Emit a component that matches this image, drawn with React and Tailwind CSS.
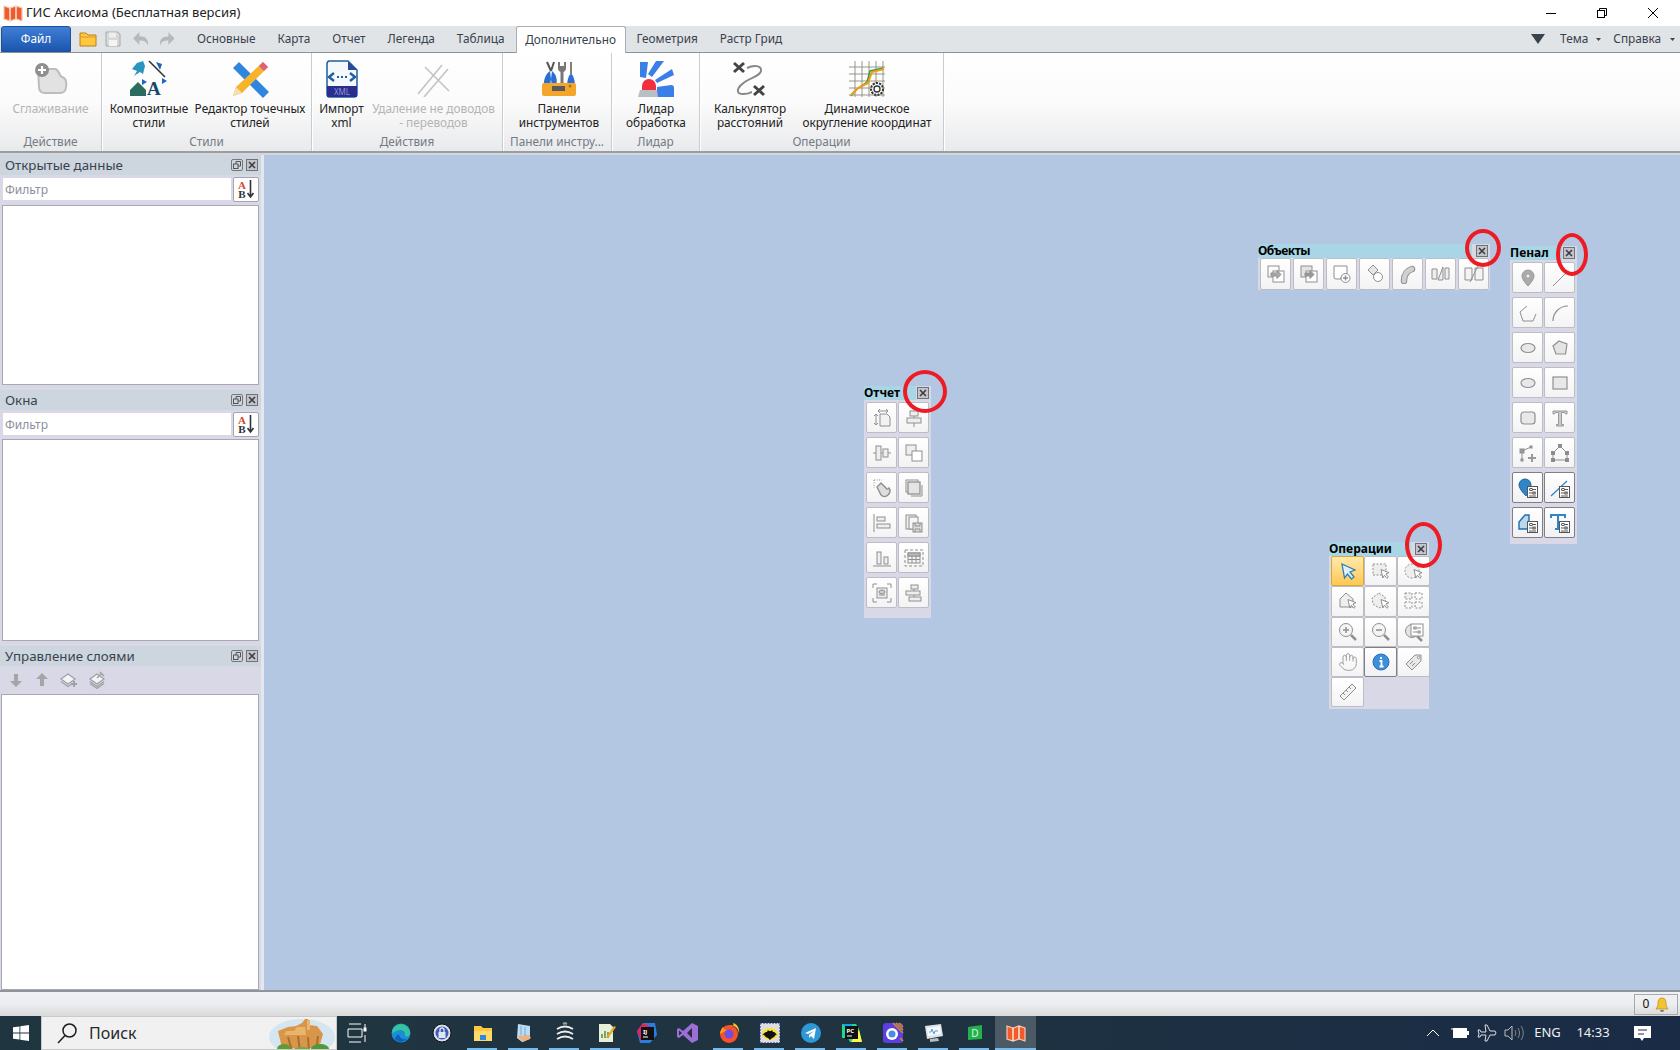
import { Hand } from "lucide-react"

const S = "#8f8f8f"

// small cursor used by the selection tools
const Cursor = () => <path d="M10 8.5l8 3.2-3.2 1.3 2.6 3-1.4 1.3-2.6-3-1.6 2.7z" fill="#fff" stroke={S} strokeWidth="1" />

// small style sheet badge
const Sheet = () => (
  <g stroke="#555" strokeWidth="1">
    <rect x="9.5" y="8.5" width="10" height="11" fill="#fff" />
    <path d="M11 11.5h7M11 15h7M11 18h7" />
    <rect x="12" y="10.5" width="2" height="2" fill="#fff" />
    <rect x="15" y="14" width="2" height="2" fill="#fff" />
  </g>
)

const Doc = ({ x = 0, y = 0 }) => <path transform={`translate(${x} ${y})`} d="M2 2h7l3 3v9H2z" fill="#f2f2f2" />

const toolIcons = {
  resize: <><path d="M6 3h10M6 3l2-2M6 3l2 2M16 3l-2-2M16 3l-2 2M4 6v11M4 6L2 8M4 6l2 2M4 17l-2-2M4 17l2-2" /><Doc x={6} y={4} /></>,
  alignV: <><path d="M10 1v18" /><rect x="6" y="3" width="8" height="5" fill="#eee" /><rect x="3" y="10" width="14" height="5" fill="#eee" /></>,
  alignH: <><path d="M1 10h18" /><rect x="4" y="3" width="5" height="14" fill="#eee" /><rect x="11" y="6" width="5" height="8" fill="#eee" /></>,
  overlap: <><rect x="2" y="2" width="10" height="10" fill="#eee" /><rect x="8" y="8" width="10" height="10" fill="#fff" /></>,
  magnet: <><path d="M2 2h8M2 2v8" strokeDasharray="1 1.5" /><path d="M5 9l4-4 6 6a2 2 0 0 0 2-1 5 5 0 0 1-1 7 5 5 0 0 1-7 0z" fill="#ddd" strokeWidth="1.4" /></>,
  stack: <><rect x="2" y="2" width="12" height="12" /><rect x="4" y="4" width="12" height="12" fill="#e4e4e4" strokeWidth="1.3" /><path d="M18 7v11H7" /></>,
  left: <><path d="M2 1v18" /><rect x="5" y="4" width="8" height="4" fill="#eee" /><rect x="5" y="11" width="13" height="4" fill="#eee" /></>,
  copySave: <><rect x="2" y="2" width="10" height="14" fill="#eee" /><rect x="5" y="4" width="9" height="12" fill="#f6f6f6" /><rect x="9" y="10" width="9" height="9" fill="#ddd" /><path d="M11 10v3h5v-3M11 19v-3h5v3" /></>,
  bottom: <><path d="M1 18h18" /><rect x="5" y="4" width="4" height="12" fill="#eee" /><rect x="12" y="9" width="4" height="7" fill="#eee" /></>,
  tableFrame: <><rect x="1" y="2" width="18" height="16" strokeDasharray="3 2" /><rect x="4" y="5" width="12" height="10" fill="#f4f4f4" /><path d="M4 8h12M4 11.5h12M8 5v10M12 5v10" /><rect x="4" y="5" width="12" height="3" fill="#bbb" /></>,
  fit: <><path d="M1 5V1h4M15 1h4v4M1 15v4h4M19 15v4h-4" /><rect x="5" y="5" width="10" height="10" fill="#eee" /><ellipse cx="10" cy="9" rx="3" ry="2" fill="#ccc" /><path d="M7 12h6" /></>,
  org: <><rect x="7" y="2" width="7" height="4" fill="#eee" /><rect x="2" y="8" width="14" height="4" fill="#eee" /><rect x="5" y="14" width="12" height="4" fill="#eee" /><path d="M10 6v2M10 12v2" /></>,
  copyIn: <><rect x="2" y="2" width="11" height="11" /><rect x="7" y="7" width="11" height="11" fill="#fff" /><path d="M5 9h6V6.5l4 4-4 4V12H5z" fill="#aaa" /></>,
  copyOut: <><rect x="2" y="2" width="11" height="11" fill="#e4e4e4" /><rect x="7" y="7" width="11" height="11" fill="#fff" /><path d="M6 9h5V6.5l4 4-4 4V12H6z" fill="#999" /></>,
  addShape: <><path d="M2 2h13v8h-2a5 5 0 0 0-4 5H4a2 2 0 0 1-2-2z" fill="#fff" /><circle cx="13.5" cy="14" r="4.5" fill="#fff" /><path d="M11 14h5M13.5 11.5v5" strokeWidth="1.4" /></>,
  diamond: <><path d="M8 1l5 5-5 5-5-5z" fill="#e6e6e6" /><circle cx="13" cy="13" r="4.5" fill="#fff" /></>,
  bend: <><path d="M6 17c0-6 2-10 8-12" strokeWidth="6.5" strokeLinecap="round" /><path d="M6 17c0-6 2-10 8-12" stroke="#d0d0d0" strokeWidth="4.5" strokeLinecap="round" /></>,
  mirror: <><path d="M1 5h5v10H1zM7 16L12 3v13zM14 4h4v11h-4z" fill="#eee" /></>,
  slash: <><path d="M1 4h7v12H1zM11 4h8v12h-8z" fill="#f4f4f4" /><path d="M6 18L14 2" /></>,
  pin: <><path d="M10 2a6 6 0 0 1 6 6c0 4-6 10-6 10S4 12 4 8a6 6 0 0 1 6-6z" fill="#aaa" stroke="#999" /><circle cx="10" cy="8" r="1.5" fill="#eee" stroke="none" /></>,
  line: <path d="M3 18L17 4" />,
  polyOpen: <path d="M9 3L2 9l3 9h10l3-7" />,
  arc: <path d="M3 18C3 10 9 3 18 3" strokeWidth="1.2" />,
  ellipse: <ellipse cx="10" cy="10" rx="7" ry="4.5" fill="#e8e8e8" strokeWidth="1.2" />,
  pentagon: <path d="M9 3l8 3-1.5 10H6L3 8z" fill="#e4e4e4" strokeWidth="1.2" />,
  rect: <rect x="3" y="4" width="14" height="12" fill="#e8e8e8" strokeWidth="1.2" />,
  round: <rect x="3" y="4" width="14" height="12" rx="3" fill="#e8e8e8" strokeWidth="1.2" />,
  serifT: <path d="M3 6V3h14v3h-1.5l-1-1.5h-3v12h2V18H6.5v-1.500h2v-12h-3l-1 1.500z" fill="#ccc" stroke="#999" />,
  nodeAdd: <><path d="M4 8l9-4M4 8v9" /><rect x="2" y="6" width="4" height="4" fill="#999" /><rect x="12" y="3" width="2" height="2" fill="#999" /><rect x="3" y="16" width="2" height="2" fill="#999" /><path d="M10 15h8M14 11v8" stroke="#999" strokeWidth="2" /></>,
  nodePoly: <><path d="M10 3L3 10v7h14v-7z" /><g fill="#888"><rect x="8.5" y="1.5" width="3" height="3" /><rect x="1.5" y="8.5" width="3" height="3" /><rect x="15.5" y="8.5" width="3" height="3" /><rect x="1.5" y="15.5" width="3" height="3" /><rect x="15.5" y="15.5" width="3" height="3" /></g></>,
  pinStyle: <><path d="M7 1a6 6 0 0 1 6 6c0 4-5 11-5 11S1 11 1 7a6 6 0 0 1 6-6z" fill="#2e86c9" stroke="#1f5f96" /><Sheet /></>,
  lineStyle: <><path d="M1 18L17 3" stroke="#2e86c9" strokeWidth="1.3" /><Sheet /></>,
  polyStyle: <><path d="M7 2L1 9v7h10V2z" fill="#bcd8ee" stroke="#1f6fb0" strokeWidth="1.4" /><Sheet /></>,
  tStyle: <><path d="M1 5V2h14v3M8 2v14M5 16h6" stroke="#2e86c9" strokeWidth="2" /><Sheet /></>,
  arrow: <path d="M4 3l13 6-5 2 4 5-2.5 2-4-5-3 4z" fill="#dff0fb" stroke="#2f7fb8" strokeWidth="1.3" />,
  dashRect: <><rect x="2" y="3" width="13" height="11" fill="#eee" strokeDasharray="2 1.5" /><Cursor /></>,
  dashCircle: <><circle cx="8" cy="10" r="7" fill="#eee" strokeDasharray="2 1.5" /><Cursor /></>,
  house: <><path d="M8 2l7 6v8H2V8z" fill="#eee" /><Cursor /></>,
  dashPoly: <><path d="M8 2l6 4 1 8-7 3-6-4-1-6z" fill="#eee" strokeDasharray="2 1.5" /><Cursor /></>,
  grid: <g strokeDasharray="2 1.5"><rect x="1" y="2" width="7" height="6" fill="#eee" /><rect x="11" y="2" width="7" height="6" /><rect x="1" y="11" width="7" height="6" /><rect x="11" y="11" width="7" height="6" /></g>,
  zoomIn: <><circle cx="8" cy="8" r="6.5" fill="#f4f4f4" /><path d="M5 8h6M8 5v6" strokeWidth="1.5" /><path d="M13 13l5 5" strokeWidth="2.5" /></>,
  zoomOut: <><circle cx="8" cy="8" r="6.5" fill="#f4f4f4" /><path d="M5 8h6" strokeWidth="1.5" /><path d="M13 13l5 5" strokeWidth="2.5" /></>,
  zoomStyle: <><circle cx="8" cy="9" r="6.5" fill="#e4e4e4" /><path d="M13 14l5 5" strokeWidth="2.5" /><rect x="7" y="2" width="12" height="12" fill="#fff" /><path d="M9 6h8M9 10h8" /><rect x="10" y="5" width="2" height="2" fill="#fff" /><rect x="14" y="9" width="2" height="2" fill="#fff" /></>,
  info: <><circle cx="10" cy="10" r="8" fill="#3d8fd9" stroke="#2a6fb0" /><path d="M10 5v2M8.5 9H10.5V14M8.5 14.5h4" stroke="#fff" strokeWidth="1.8" /></>,
  tag: <><path d="M2 12L11 3h6v6l-9 9z" fill="#e8e8e8" /><circle cx="14.5" cy="5.5" r="1.2" fill="#fff" /><path d="M6 12l3-3M8 14l3-3" /></>,
  ruler: <path d="M2 14L14 2l4 4L6 18zM5 11l2 2M8 8l2 2M11 5l2 2" fill="#f2f2f2" />,
}

function ToolIcon({ name }) {
  if (name === "hand") return <Hand size={20} strokeWidth={1.1} color="#999" />
  return (
    <svg width="20" height="20" viewBox="0 0 20 20" fill="none" stroke={S} strokeWidth="1">
      {toolIcons[name]}
    </svg>
  )
}

function CloseBox({ className }) {
  return (
    <div className={`w-[12px] h-[12px] bg-[#c4c4ca] border border-[#6f7276] flex items-center justify-center ${className || ""}`}>
      <svg width="8" height="8" viewBox="0 0 8 8" stroke="#3a3d40" strokeWidth="1.6">
        <path d="M1 1l6 6M7 1l-6 6" />
      </svg>
    </div>
  )
}

function ToolButton({ name, dark, active }) {
  return (
    <button
      className={`flex items-center justify-center border rounded-[2px] ${
        active
          ? "border-[#d8a93f] bg-gradient-to-b from-[#ffe9a8] to-[#ffc850]"
          : dark
            ? "border-[#7f7f85] bg-gradient-to-b from-white to-[#f1f1f4]"
            : "border-[#bdbdc4] bg-gradient-to-b from-white to-[#f3f3f5]"
      }`}
    >
      <ToolIcon name={name} />
    </button>
  )
}

function ToolHeader({ title, headerClass }) {
  return (
    <div className="flex items-center h-[14px] justify-between">
      <div className={`h-full flex items-center text-[12px] font-bold text-black leading-none bg-[#a8d6e6] ${headerClass}`}>{title}</div>
      <CloseBox className="mr-[2px]" />
    </div>
  )
}

function RedRing({ className }) {
  return <div className={`absolute rounded-[50%] border-4 border-[#ed1c24] pointer-events-none ${className}`} />
}

function MapWindows() {
  const report = ["resize", "alignV", "alignH", "overlap", "magnet", "stack", "left", "copySave", "bottom", "tableFrame", "fit", "org"]
  const objects = ["copyIn", "copyOut", "addShape", "diamond", "bend", "mirror", "slash"]
  const pen = ["pin", "line", "polyOpen", "arc", "ellipse", "pentagon", "ellipse", "rect", "round", "serifT", "nodeAdd", "nodePoly"]
  const penDark = ["pinStyle", "lineStyle", "polyStyle", "tStyle"]
  const ops = ["arrow", "dashRect", "dashCircle", "house", "dashPoly", "grid", "zoomIn", "zoomOut", "zoomStyle", "hand", "info", "tag", "ruler"]

  return (
    <>
      <div className="absolute left-[600px] top-[231px] w-[67px] h-[232px] bg-[#d8d8e6]">
        <ToolHeader title="Отчет" headerClass="w-[52px]" />
        <div className="grid grid-cols-[31px_31px] auto-rows-[31px] gap-x-px gap-y-1 pl-[2px] pt-[2px]">
          {report.map((n) => <ToolButton key={n} name={n} />)}
        </div>
        <RedRing className="left-[39px] top-[-16px] w-[44px] h-[43px]" />
      </div>

      <div className="absolute left-[994px] top-[89px] w-[232px] h-[46px] bg-[#d8d8e6]">
        <ToolHeader title="Объекты" headerClass="w-[214px] tracking-[-0.5px]" />
        <div className="grid grid-cols-[repeat(7,31px)] auto-rows-[32px] gap-x-[2px] pl-[2px]">
          {objects.map((n) => <ToolButton key={n} name={n} />)}
        </div>
        <RedRing className="left-[207px] top-[-15px] w-[36px] h-[38px]" />
      </div>

      <div className="absolute left-[1246px] top-[91px] w-[67px] h-[298px] bg-[#d8d8e6]">
        <ToolHeader title="Пенал" headerClass="w-[52px]" />
        <div className="grid grid-cols-[31px_31px] auto-rows-[31px] gap-x-px gap-y-1 pl-[2px] pt-[2px]">
          {pen.map((n, i) => <ToolButton key={i} name={n} />)}
          {penDark.map((n) => <ToolButton key={n} name={n} dark />)}
        </div>
        <RedRing className="left-[46px] top-[-13px] w-[32px] h-[43px]" />
      </div>

      <div className="absolute left-[1065px] top-[387px] w-[100px] h-[167px] bg-[#d8d8e6]">
        <ToolHeader title="Операции" headerClass="w-[82px]" />
        <div className="grid grid-cols-[33px_33px_33px] auto-rows-[30.3px] pl-[2px]">
          {ops.map((n, i) => <ToolButton key={n} name={n} active={i === 0} dark={n === "info"} />)}
        </div>
        <RedRing className="left-[76px] top-[-20px] w-[37px] h-[46px]" />
      </div>
    </>
  )
}

function DockHeader({ title }) {
  return (
    <div className="h-[20px] bg-[#cdd5de] flex items-center pl-[5px] pr-[3px] text-[13.3px] text-[#39434e]">
      <span className="flex-1 pt-[2px]">{title}</span>
      <div className="w-[12px] h-[12px] border border-[#777] rounded-[2px] flex items-center justify-center mr-[3px]">
        <svg width="8" height="8" viewBox="0 0 8 8" fill="none" stroke="#555"><rect x="0.5" y="3" width="4.5" height="4.5" /><path d="M3 3V0.5h4.5V5H5" /></svg>
      </div>
      <CloseBox />
    </div>
  )
}

function FilterRow({ className }) {
  return (
    <div className={`flex items-start gap-[2px] pl-[3px] pt-[2px] ${className}`}>
      <input placeholder="Фильтр" className="w-[228px] h-[22px] mt-px bg-white pl-[2px] text-[12px] placeholder:text-[#8b8f9b] outline-none" />
      <button className="w-[26px] h-[25px] bg-white border border-[#a5a5ad] rounded-[2px] flex items-center justify-center gap-[1px]">
        <span className="flex flex-col text-[11px] leading-[9px] font-bold font-['Liberation_Serif',serif]">
          <span className="text-[#d8482b]">A</span>
          <span className="text-[#333]">B</span>
        </span>
        <svg width="7" height="19" viewBox="0 0 7 19" fill="none" stroke="#333" strokeWidth="1.6"><path d="M3.5 0v17M0.5 13l3 4 3-4" /></svg>
      </button>
    </div>
  )
}

function LeftDock() {
  return (
    <div className="w-[264px] shrink-0 flex flex-col bg-[#d8d8e6] border-r-[3px] border-[#e4e7ee]">
      <div className="h-[235px] flex flex-col">
        <DockHeader title="Открытые данные" />
        <FilterRow className="h-[30px]" />
        <div className="ml-[2px] mr-[2px] h-[180px] bg-white border border-[#a8a8b4]" />
      </div>
      <div className="h-[256px] flex flex-col">
        <DockHeader title="Окна" />
        <FilterRow className="h-[29px]" />
        <div className="ml-[2px] mr-[2px] h-[202px] bg-white border border-[#a8a8b4]" />
      </div>
      <div className="flex-1 flex flex-col">
        <DockHeader title="Управление слоями" />
        <div className="h-[28px] flex items-center gap-[10px] pl-[8px]">
          <svg width="16" height="16" viewBox="0 0 16 16" fill="#a5a5a9"><path d="M6 2h4v7h4l-6 6-6-6h4z" /></svg>
          <svg width="16" height="16" viewBox="0 0 16 16" fill="#a5a5a9"><path d="M6 14h4V7h4L8 1 2 7h4z" /></svg>
          <svg width="18" height="18" viewBox="0 0 18 18" fill="none" stroke="#a0a0a4" strokeWidth="1.2"><path d="M8 3l7 5-7 5-7-5z" fill="#f4f4f6" /><path d="M1 10.5l7 5 3-2" /><path d="M11 13h6M14 10v6" strokeWidth="2" /></svg>
          <svg width="18" height="18" viewBox="0 0 18 18" fill="none" stroke="#a0a0a4" strokeWidth="1.2"><path d="M9 3l7 5-7 5-7-5z" fill="#f4f4f6" /><path d="M2 10.5l7 5 7-5M2 12.5l7 5 7-5" /><path d="M9 7l5-5M12 1l4 4" strokeWidth="1.5" /></svg>
        </div>
        <div className="ml-px mr-[2px] flex-1 bg-white border border-[#a8a8b4]" />
      </div>
    </div>
  )
}

function RibbonItem({ icon, label, disabled, className }) {
  return (
    <div className={`flex flex-col items-center pt-[7px] ${className || ""}`}>
      <div className="h-[38px] flex items-center justify-center">{icon}</div>
      <div className={`mt-[3px] text-[11.8px] leading-[14px] text-center whitespace-pre-line ${disabled ? "text-[#b4b4b4]" : "text-[#222]"}`}>{label}</div>
    </div>
  )
}

function RibbonGroup({ label, className, children }) {
  return (
    <div className={`flex flex-col border-r border-[#c8ccd2] shadow-[1px_0_0_#fff] ${className}`}>
      <div className="flex-1 flex justify-center">{children}</div>
      <div className="h-[21px] text-[11.8px] text-[#737b84] text-center leading-[22px] truncate px-[6px]">{label}</div>
    </div>
  )
}

const SmoothIcon = (
  <svg width="36" height="36" viewBox="0 0 36 36">
    <path d="M5 8h17c4 0 4 7 7 8 4 1 5 6 4 10 0 4-3 6-6 6H12c-4 0-6-2-6-6z" fill="#e2e2e2" stroke="#bdbdbd" strokeWidth="2" />
    <circle cx="9" cy="9" r="7" fill="#8f8f8f" />
    <path d="M5 9h8M9 5v8" stroke="#fff" strokeWidth="2.2" />
  </svg>
)

const CompositeIcon = (
  <svg width="38" height="38" viewBox="0 0 38 38">
    <path d="M19 1l16 16" stroke="#333" strokeWidth="1.6" />
    <path d="M26 2l6 2-2 6z" fill="#2162b8" />
    <path d="M13 1L7 3 2 9l5 2-3 5 6-4 3 2 2-8z" fill="#2b95bd" />
    <path d="M0 36V30l8-8 8 8v6z" fill="#2a6b62" />
    <path d="M12 19l5 3-5 3z" fill="#1e66c4" />
    <path d="M32 18l5 3-5 3z" fill="#1e66c4" />
    <text x="17" y="35" fontFamily="Liberation Serif, serif" fontWeight="700" fontSize="19" fill="#16486c">A</text>
  </svg>
)

const EditorIcon = (
  <svg width="38" height="38" viewBox="0 0 38 38">
    <path d="M2 8l6-6 30 30-6 6z" fill="#2f86de" />
    <path d="M32 2l5 5-26 26-9 3 3-9z" fill="#f7b32b" />
    <path d="M32 2l5 5-4 4-5-5z" fill="#e0607a" />
    <path d="M5 27l6 6-9 3z" fill="#f5deb3" />
  </svg>
)

const XmlIcon = (
  <svg width="32" height="38" viewBox="0 0 32 38">
    <path d="M3 1h19l9 9v24a3 3 0 0 1-3 3H3a3 3 0 0 1-2-3V4a3 3 0 0 1 2-3z" fill="#f4f8fd" stroke="#1d5f9f" strokeWidth="1.5" />
    <path d="M22 1l9 9h-9z" fill="#2a4a9a" />
    <rect x="1" y="26" width="30" height="11" fill="#2a2d8e" />
    <path d="M8 13l-5 4 5 4M24 13l5 4-5 4" fill="none" stroke="#1d5f9f" strokeWidth="2.4" />
    <path d="M11 17h10" stroke="#1d5f9f" strokeWidth="2" strokeDasharray="2 2" />
    <text x="16" y="35" textAnchor="middle" fontSize="8" fill="#8f93d8" fontFamily="Noto Sans, sans-serif">XML</text>
  </svg>
)

const DeleteIcon = (
  <svg width="36" height="36" viewBox="0 0 36 36" stroke="#c4c4c4" strokeWidth="1.6">
    <path d="M2 33L26 4M8 36L32 8M9 6l24 24" />
  </svg>
)

const ToolboxIcon = (
  <svg width="36" height="36" viewBox="0 0 36 36">
    <path d="M6 1l4 9M13 1l-3 9" stroke="#555" strokeWidth="2" />
    <path d="M3 26c-1-9 3-14 6-16l2 16zM15 26c2-8 0-13-4-16l-2 16z" fill="#2c6fd4" />
    <path d="M21 26V10" stroke="#777" strokeWidth="3" />
    <path d="M17 1v6a4 4 0 0 0 8 0V1h-2v4h-4V1z" fill="#777" />
    <path d="M30 1v12" stroke="#555" strokeWidth="1.5" />
    <path d="M26 26c0-7 2-13 4-13s4 6 4 13z" fill="#2c6fd4" />
    <rect x="1" y="22" width="34" height="13" rx="2" fill="#f4a62b" />
    <rect x="11" y="25" width="13" height="5" fill="#5a5a5a" />
    <circle cx="29" cy="25" r="1.5" fill="#a8761a" />
  </svg>
)

const LidarIcon = (
  <svg width="38" height="38" viewBox="0 0 38 38">
    <path d="M3 2h8l-2 16-6-1z" fill="#3a7fe8" />
    <path d="M19 1h8l-12 16-4-3z" fill="#3a7fe8" />
    <path d="M35 9l2 6-17 8-2-3z" fill="#3a7fe8" />
    <path d="M20 27l14-2c2 0 3 1 3 3v9H20z" fill="#3a7fe8" />
    <path d="M5 30v-4a7 7 0 0 1 14 0v4z" fill="#f22f3c" />
    <path d="M1 37l2-7h17l1 7z" fill="#b9bdc4" />
  </svg>
)

const DistanceIcon = (
  <svg width="36" height="36" viewBox="0 0 36 36" fill="none">
    <path d="M2 2l10 9M12 2L2 11M22 25l10 9M32 25L22 34" stroke="#444" strokeWidth="3" />
    <path d="M15 7c6-3 15-3 14 3-1 6-12 6-20 14-4 4-5 9 2 9s8-2 9-2" stroke="#888" strokeWidth="2" />
  </svg>
)

const CoordIcon = (
  <svg width="36" height="36" viewBox="0 0 36 36" fill="none">
    <path d="M6 0v36M13 0v36M20 0v36M27 0v36M34 0v36M0 6h36M0 13h36M0 20h36M0 27h36M0 34h36" stroke="#8d8a7e" strokeWidth="0.9" />
    <path d="M2 35l6-7 10-7 3-11 13-3" stroke="#2ea043" strokeWidth="1.5" />
    <path d="M2 34l7-7 10-5 4-11 12-3" stroke="#f59a12" strokeWidth="2" />
    <circle cx="28" cy="28" r="6" fill="#f4f4f4" stroke="#333" strokeWidth="2" strokeDasharray="2.2 1.1" />
    <circle cx="28" cy="28" r="3" fill="#fff" stroke="#333" strokeWidth="1.3" />
  </svg>
)

const MapLogo = ({ size = 20 }) => (
  <svg width={size} height={size} viewBox="0 0 20 20">
    <path d="M1 3l6 2 6-2 6 2v13l-6-2-6 2-6-2z" fill="#ef5b2b" stroke="#f4c9b3" strokeWidth="1.2" />
    <path d="M7 5v13M13 3v13" stroke="#fbe5d8" strokeWidth="1.5" />
  </svg>
)

function Ribbon() {
  return (
    <div className="h-[100px] shrink-0 flex bg-gradient-to-b from-white via-[#fbfbfb] to-[#e9eaec] border-b-2 border-[#9a9ea3]">
      <RibbonGroup label="Действие" className="w-[102px]">
        <RibbonItem icon={SmoothIcon} label="Сглаживание" disabled />
      </RibbonGroup>
      <RibbonGroup label="Стили" className="w-[210px]">
        <RibbonItem icon={CompositeIcon} label={"Композитные\nстили"} className="w-[80px] ml-[6px]" />
        <RibbonItem icon={EditorIcon} label={"Редактор точечных\nстилей"} className="w-[120px] ml-px" />
      </RibbonGroup>
      <RibbonGroup label="Действия" className="w-[191px]">
        <RibbonItem icon={XmlIcon} label={"Импорт\nxml"} className="w-[48px]" />
        <RibbonItem icon={DeleteIcon} label={"Удаление не доводов\n- переводов"} disabled className="w-[126px] ml-[5px]" />
      </RibbonGroup>
      <RibbonGroup label="Панели инстру..." className="w-[109px]">
        <RibbonItem icon={ToolboxIcon} label={"Панели\nинструментов"} className="ml-[4px]" />
      </RibbonGroup>
      <RibbonGroup label="Лидар" className="w-[88px]">
        <RibbonItem icon={LidarIcon} label={"Лидар\nобработка"} className="ml-px" />
      </RibbonGroup>
      <RibbonGroup label="Операции" className="w-[244px]">
        <RibbonItem icon={DistanceIcon} label={"Калькулятор\nрасстояний"} className="w-[80px]" />
        <RibbonItem icon={CoordIcon} label={"Динамическое\nокругление координат"} className="w-[132px] ml-[11px]" />
      </RibbonGroup>
    </div>
  )
}

function TabBar() {
  const left = ["Основные", "Карта", "Отчет", "Легенда", "Таблица"]
  const right = ["Геометрия", "Растр Грид"]
  return (
    <div className="h-[27px] shrink-0 flex items-end bg-[#e1e4e7] border-b border-[#8b9298] text-[11.8px] text-[#38424c]">
      <button className="ml-px w-[70px] h-[26px] bg-gradient-to-b from-[#3f7fd6] to-[#1b56ae] text-white rounded-t-[3px] border border-[#1c4f9c]">Файл</button>
      <div className="w-[105px] h-full flex items-center pl-[8px] shrink-0">
        <div className="w-[27px]"><svg width="18" height="16" viewBox="0 0 18 16"><path d="M1 2h6l2 2h8v11H1z" fill="#ffc83d" stroke="#b8801f" /><path d="M1 6h16" stroke="#d99c20" /></svg></div>
        <div className="w-[27px]"><svg width="16" height="16" viewBox="0 0 16 16"><path d="M1 1h12l2 2v12H1z" fill="#d6d8da" stroke="#a7aaad" /><rect x="4" y="1.5" width="7" height="5" fill="#eee" /><rect x="4" y="9" width="8" height="6" fill="#f4f4f4" /></svg></div>
        <div className="w-[27px]"><svg width="18" height="17" viewBox="0 0 17 16"><path d="M7 1L1 7l6 6V9c4 0 7 1 8 5 1-6-2-9-8-9z" fill="#b6b9bc" /></svg></div>
        <svg width="18" height="17" viewBox="0 0 17 16"><path d="M10 1l6 6-6 6V9c-4 0-7 1-8 5-1-6 2-9 8-9z" fill="#b6b9bc" /></svg>
      </div>
      {left.map((t, i) => (
        <div key={t} className={`h-full flex items-center px-[11px] ${i === 0 ? "ml-[10px]" : ""}`}>{t}</div>
      ))}
      <div className="mb-[-1px] h-[27px] w-[110px] bg-white border border-b-0 border-[#a9afb5] rounded-t-[3px] flex items-center justify-center relative z-10">Дополнительно</div>
      {right.map((t) => (
        <div key={t} className="h-full flex items-center px-[11px]">{t}</div>
      ))}
      <div className="ml-auto h-full flex items-center">
        <svg width="14" height="10" viewBox="0 0 14 10" fill="#39434d"><path d="M0 0h14L7 10z" /></svg>
        <span className="ml-[15px]">Тема</span>
        <svg className="ml-[8px]" width="5" height="3" viewBox="0 0 5 3" fill="#444"><path d="M0 0h5L2.5 3z" /></svg>
        <span className="ml-[12px]">Справка</span>
        <svg className="ml-[9px] mr-[5px]" width="5" height="3" viewBox="0 0 5 3" fill="#444"><path d="M0 0h5L2.5 3z" /></svg>
      </div>
    </div>
  )
}

function TitleBar() {
  return (
    <div className="h-[26px] shrink-0 flex items-center bg-white">
      <div className="ml-[3px] w-[23px]"><MapLogo size={20} /></div>
      <span className="text-[13px] text-[#222]">ГИС Аксиома (Бесплатная версия)</span>
      <div className="ml-auto flex items-center mr-[2px]">
        <div className="w-[51px] flex justify-center"><div className="w-[10px] h-px bg-black" /></div>
        <div className="w-[51px] flex justify-center">
          <svg width="10" height="10" viewBox="0 0 10 10" fill="none" stroke="#000"><rect x="0.5" y="2.5" width="7" height="7" /><path d="M2.5 2.5v-2h7v7h-2" /></svg>
        </div>
        <div className="w-[51px] flex justify-center">
          <svg width="12" height="12" viewBox="0 0 12 12" stroke="#000"><path d="M1 1l10 10M11 1L1 11" /></svg>
        </div>
      </div>
    </div>
  )
}

const apps = [
  [true, <svg width="22" height="22" viewBox="0 0 22 22"><path d="M2 4h7l2 2h9v13H2z" fill="#ffc83d" /><path d="M2 9h18v10H2z" fill="#ffd96a" /><rect x="8" y="13" width="6" height="5" fill="#2e8ad8" /></svg>],
  [true, <svg width="22" height="22" viewBox="0 0 22 22"><path d="M5 2l12 2v13l-8 3-5-4z" fill="#bcdcf2" /><path d="M4 14l6 6 8-4-2-3z" fill="#f0b27a" /><path d="M8 4v9M12 5v9" stroke="#6fa8d8" /></svg>],
  [true, <svg width="22" height="22" viewBox="0 0 22 22" fill="none" stroke="#eee" strokeWidth="2"><path d="M3 7c5-3 11-3 16 0M3 12c5-3 11-3 16 0M3 17c5-3 11-3 16 0" /><path d="M9 2l2-1 2 1" stroke="#999" /></svg>],
  [true, <svg width="22" height="22" viewBox="0 0 22 22"><path d="M4 2h11l3 3v15H4z" fill="#e8efd8" /><path d="M7 16v-4M10 16V9M13 16v-6" stroke="#5a8f3a" strokeWidth="1.5" /><path d="M12 14l7-10 2 1-7 10-3 1z" fill="#e8a820" /></svg>],
  [false, <svg width="22" height="22" viewBox="0 0 22 22"><path d="M7 1h12l2 12-7 8H4L1 9z" fill="#2a7de1" /><path d="M1 9l6-8 8 4-10 14z" fill="#e0245e" /><rect x="5" y="5" width="13" height="13" fill="#111" /><text x="7" y="12" fontSize="6" fontWeight="700" fill="#fff" fontFamily="Noto Sans, sans-serif">IJ</text><path d="M7 15h5" stroke="#fff" /></svg>],
  [false, <svg width="22" height="22" viewBox="0 0 22 22"><path d="M15 1l6 3v14l-6 3L6 13l-4 3-2-1V7l2-1 4 3z" fill="#9a6fd6" /><path d="M15 6L10 11l5 5z" fill="#262f3d" /><path d="M2 8.5v5L5 11z" fill="#262f3d" /></svg>],
  [true, <svg width="22" height="22" viewBox="0 0 22 22"><circle cx="11" cy="12" r="9" fill="#f5512b" /><path d="M11 3c6 0 10 4 10 9 1-6-2-10-6-11 1 2 0 3-1 3z" fill="#ffc01f" /><circle cx="11" cy="12" r="4.5" fill="#6b4ee0" /><path d="M2 12c0-3 2-6 3-7 0 2 2 3 4 3" fill="#ff9b23" /></svg>],
  [true, <svg width="22" height="22" viewBox="0 0 22 22"><rect x="1" y="1" width="20" height="20" fill="#ddd" stroke="#1a2a80" strokeDasharray="2 1" /><ellipse cx="11" cy="12" rx="8" ry="6" fill="#f8e13d" /><path d="M3 12c3 0 2-2 5-2l1-2 1 1h2l1-1 1 2c3 0 2 2 4 2-2 1-3 4-5 4l-2 2-2-2c-2 0-3-3-6-4z" fill="#111" /></svg>],
  [true, <svg width="22" height="22" viewBox="0 0 22 22"><circle cx="11" cy="11" r="10" fill="#2e97d6" /><path d="M5 11l11-5-2 11-3-3-2 2v-3l5-4-6 3z" fill="#fff" /></svg>],
  [true, <svg width="22" height="22" viewBox="0 0 22 22"><path d="M1 2h14l3 5 3 13-12 0-2-4-6 0z" fill="#21d789" /><path d="M1 2h10v8z" fill="#0ea5e9" /><path d="M21 20H10l8-12z" fill="#fcf84a" /><rect x="4" y="4" width="13" height="13" fill="#111" /><text x="5.5" y="10.5" fontSize="6" fontWeight="700" fill="#fff" fontFamily="Noto Sans, sans-serif">PC</text><path d="M6 14h5" stroke="#fff" /></svg>],
  [true, <svg width="22" height="22" viewBox="0 0 22 22"><rect x="1" y="1" width="20" height="20" rx="3" fill="#5c3fe0" /><circle cx="10" cy="12" r="6" fill="#fff" /><circle cx="10" cy="12" r="3.5" fill="#4a8ae8" /><path d="M14 1l7 7M17 1l4 4M11 1l10 10M18 16l3 3" stroke="#d98a1f" strokeWidth="1.5" /></svg>],
  [true, <svg width="22" height="22" viewBox="0 0 22 22"><path d="M2 4l16-2 2 12-16 3z" fill="#dfe3e8" /><path d="M4 6l13-2 1 8-13 2z" fill="#f6f8fb" /><path d="M6 10h2l1-3 2 5 1-3h3" stroke="#4f9fd8" fill="none" /><path d="M7 17l8-1 1 3-9 1z" fill="#b9bdc2" /></svg>],
  [true, <svg width="18" height="18" viewBox="0 0 18 18"><path d="M2 3l14-2v14L2 16z" fill="#22b14c" /><text x="9" y="13" textAnchor="middle" fontSize="10" fill="#d9f5e0" fontFamily="Noto Sans, sans-serif">D</text></svg>],
]

function Taskbar() {
  return (
    <div className="h-[34px] shrink-0 flex items-stretch bg-gradient-to-r from-[#1f3640] via-[#1f3340] to-[#1a2b46] text-white">
      <div className="w-[41px] flex items-center justify-center">
        <svg width="16" height="16" viewBox="0 0 16 16" fill="#fff"><path d="M0 2.3l6.5-.9v6.2H0zM7.3 1.3L16 0v7.6H7.3zM0 8.4h6.5v6.2L0 13.7zM7.3 8.4H16V16l-8.7-1.2z" /></svg>
      </div>
      <div className="w-[296px] bg-[#f1f1f1] border border-[#c7c9cb] flex items-center pl-[14px] relative overflow-hidden">
        <svg width="22" height="22" viewBox="0 0 22 22" fill="none" stroke="#1c1c1c" strokeWidth="1.5"><circle cx="13.5" cy="8.5" r="6.5" /><path d="M9 13.5L2 21" /></svg>
        <span className="ml-[11px] text-[16px] text-[#26292c]">Поиск</span>
        <svg className="absolute right-0 top-0" width="68" height="34" viewBox="0 0 68 34">
          <ellipse cx="34" cy="20" rx="33" ry="18" fill="#d6e6f0" />
          <path d="M10 14l10-4 8-1 6-3 3-4h3l1 6 8 1 6 8-4 14H14z" fill="#d9954a" />
          <path d="M18 14h8l3-4h8l1 8H16zM39 3h3v10h-3z" fill="#e8b56a" />
          <path d="M20 20l4 14M30 19l2 15M40 20l1 14M50 19l-2 15" stroke="#a86f2c" strokeWidth="2" />
          <ellipse cx="16" cy="32" rx="7" ry="5" fill="#5c9e35" />
          <ellipse cx="52" cy="32" rx="9" ry="5" fill="#4f9a3a" />
          <ellipse cx="34" cy="34" rx="10" ry="4" fill="#6aad3f" />
        </svg>
      </div>
      <div className="w-[43px] pr-[4px] flex items-center justify-center">
        <svg width="20" height="20" viewBox="0 0 20 20" fill="none" stroke="#fff"><path d="M2 1h12M1 6h14v8H1zM2 19h12M18 1v7M18 12v7" /><rect x="17" y="5" width="2" height="3" fill="#fff" /></svg>
      </div>
      <div className="flex items-center justify-center w-[41px] relative"><EdgeIcon /></div>
      <div className="flex items-center justify-center w-[41px]"><LockIcon /></div>
      {apps.map(([running, icon], i) => (
        <div key={i} className="w-[41px] flex items-center justify-center relative">
          {icon}
          {running && <div className="absolute bottom-0 left-[5px] right-[6px] h-[2px] bg-[#76b9ed]" />}
        </div>
      ))}
      <div className="w-[41px] bg-[#4c5a66] flex items-center justify-center relative">
        <MapLogo size={20} />
        <div className="absolute bottom-0 left-0 right-0 h-[2px] bg-[#76b9ed]" />
      </div>

      <div className="ml-auto flex items-center text-[13px]">
        <div className="w-[27px] flex justify-center">
          <svg width="14" height="8" viewBox="0 0 14 8" fill="none" stroke="#fff"><path d="M1 7l6-6 6 6" /></svg>
        </div>
        <div className="w-[27px] flex justify-center">
          <svg width="18" height="12" viewBox="0 0 18 12"><rect x="2.5" y="1.5" width="13" height="9" fill="#fff" stroke="#fff" /><rect x="16" y="4" width="2" height="4" fill="#fff" /><path d="M0 2h3" stroke="#fff" /></svg>
        </div>
        <div className="w-[27px] flex justify-center">
          <svg width="20" height="18" viewBox="0 0 20 18" fill="none" stroke="#ddd"><path d="M8 1h2l3 6h5l1 2-1 2h-5l-3 6H8l1-6H4l-1 2H1l1-3-1-4h2l1 2h5z" /></svg>
        </div>
        <div className="w-[27px] flex justify-center">
          <svg width="20" height="16" viewBox="0 0 20 16" fill="none" stroke="#bbb"><path d="M1 5h3l4-4v14l-4-4H1z" /><path d="M11 5c1 2 1 4 0 6M14 3c2 3 2 7 0 10M17 1c3 4 3 10 0 14" stroke="#888" /></svg>
        </div>
        <div className="w-[41px] text-center text-[#eef1f4]">ENG</div>
        <div className="w-[50px] text-center text-[#eef1f4]">14:33</div>
        <div className="w-[48px] flex justify-center">
          <svg width="19" height="19" viewBox="0 0 19 19"><path d="M1 2h17v12H11l-2 3-2-3H1z" fill="#fff" /><path d="M5 6h9M5 10h6" stroke="#1a2b46" /></svg>
        </div>
        <div className="w-[14px]" />
      </div>
    </div>
  )
}

function EdgeIcon() {
  return (
    <svg width="20" height="20" viewBox="0 0 20 20">
      <circle cx="10" cy="10" r="9.5" fill="#1a8fd8" />
      <path d="M1 10a9 9 0 0 1 18 0c0 3-3 4-5 3 1-4-2-6-5-6-4 0-6 3-8 3z" fill="#35c59c" />
      <path d="M8 11c0 4 4 6 8 5-3 3-9 4-12 0 0-2 2-4 4-5z" fill="#0f5fb8" />
    </svg>
  )
}

function LockIcon() {
  return (
    <svg width="20" height="20" viewBox="0 0 20 20">
      <circle cx="10" cy="10" r="9" fill="#d9dff0" stroke="#111" />
      <circle cx="10" cy="10" r="6.5" fill="#3f5cb0" />
      <rect x="6.5" y="9" width="7" height="6" fill="#dfe5f5" />
      <path d="M8 9V7a2 2 0 0 1 4 0v2" fill="none" stroke="#dfe5f5" strokeWidth="1.3" />
    </svg>
  )
}

function StatusBar() {
  return (
    <div className="h-[26px] shrink-0 flex justify-end items-center bg-gradient-to-b from-[#f0f1f5] via-[#eceef1] to-[#d9d9d9] border-t-[2px] border-[#8f949a]">
      <div className="w-[44px] h-[21px] mr-[2px] border border-[#a9a9a9] flex items-center justify-center gap-[6px] text-[12px] text-[#111]">
        0
        <svg width="14" height="15" viewBox="0 0 14 15"><path d="M7 1c3 0 4 2 4 5 0 3 1 4 2 6H1c1-2 2-3 2-6 0-3 1-5 4-5z" fill="#f6c22d" stroke="#a87f10" strokeWidth="0.6" /><path d="M5 13a2 2 0 0 0 4 0z" fill="#777" /></svg>
      </div>
    </div>
  )
}

function App() {
  return (
    <div className="w-[1680px] h-[1050px] flex flex-col overflow-hidden font-['Noto_Sans',sans-serif] bg-white">
      <TitleBar />
      <TabBar />
      <Ribbon />
      <div className="h-[2px] shrink-0 bg-[#d4d7dc]" />
      <div className="flex-1 flex min-h-0">
        <LeftDock />
        <div className="flex-1 relative bg-[#b3c7e2]">
          <MapWindows />
        </div>
      </div>
      <StatusBar />
      <Taskbar />
    </div>
  )
}

export default App
